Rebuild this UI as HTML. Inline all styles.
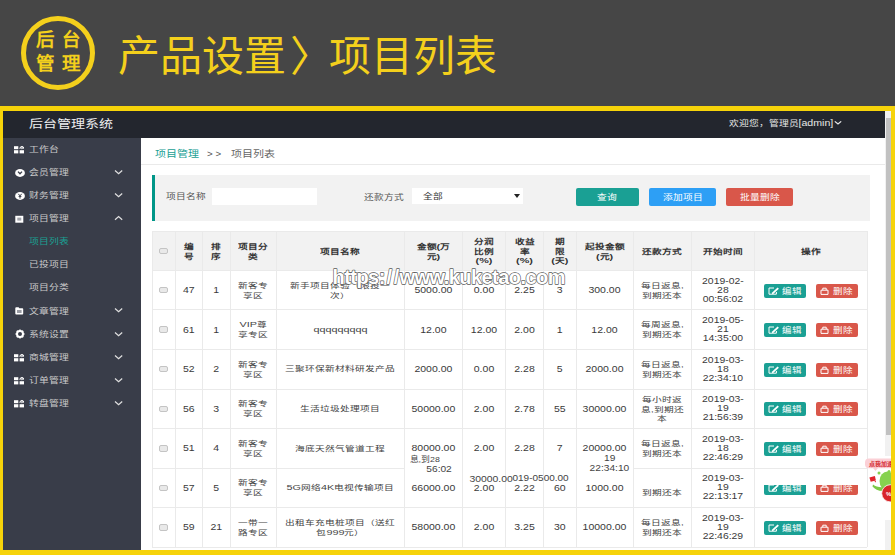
<!DOCTYPE html>
<html lang="zh-CN"><head><meta charset="utf-8">
<style>
html,body{margin:0;padding:0;}
body{width:895px;height:555px;overflow:hidden;position:relative;background:#464646;font-family:"Liberation Sans",sans-serif;}
.a{position:absolute;}
.vl{width:1px;background:#eaeaea;}
.hl{height:1px;background:#eaeaea;}
.cell{display:flex;align-items:center;justify-content:center;text-align:center;font-size:9.7px;line-height:9.6px;color:#555;}
.th{font-weight:bold;color:#333;}
.tm{display:inline-block;font-size:10.4px;line-height:11.7px;color:#3a3a3a;transform:scaleY(0.82);}
.lt{font-size:10.8px;}
.dg{display:inline-block;font-size:10.5px;line-height:12px;color:#3a3a3a;transform:scaleY(0.86);}
.t{display:inline-block;transform:scaleY(0.72);line-height:13.5px;}
.td .t{font-weight:500;color:#444;}
.th .t{position:relative;top:0.6px;}
.cb{display:inline-block;width:7px;height:4.5px;border:1px solid #c4c4c4;border-radius:2px;background:#e9e9e9;margin-left:0.5px}
.ops{justify-content:flex-start;}
.btn{position:absolute;top:50%;margin-top:-6.6px;height:14.2px;width:42px;border-radius:2px;color:#fff;font-size:9.5px;line-height:14.2px;display:flex;align-items:center;justify-content:center;}
.btn svg{display:block;}
.be{left:10px;background:#1aa094;}
.bd{left:61.5px;background:#d9574a;}
.frag{line-height:14px;color:#444;white-space:nowrap;transform:scaleY(0.86);}
.sqi{display:inline-block;transform:scaleY(0.86);}
.sq{transform:scaleY(0.84);}
.ttl{font-size:42px;line-height:50px;color:#f4d01c;font-weight:500;white-space:nowrap;}
.stext{font-size:9.8px;line-height:14px;white-space:nowrap;transform:scaleY(0.78);transform-origin:0 50%;}
.sicon svg{display:block;}
</style></head><body>
<!-- banner -->
<div class="a" style="left:21px;top:16px;width:64px;height:64px;border:5px solid #f4d01c;border-radius:50%;"></div>
<div class="a" style="left:36px;top:29px;font-family:'Liberation Serif',serif;font-weight:bold;font-size:18.5px;line-height:23.5px;color:#f4d01c;letter-spacing:6.5px;white-space:nowrap">后台<br>管理</div>
<div class="a ttl" style="left:118px;top:31.5px">产品设置</div><div class="a ttl" style="left:290px;top:31.5px">〉</div><div class="a ttl" style="left:329px;top:31.5px">项目列表</div>
<!-- frame -->
<div class="a" style="left:0;top:106px;width:895px;height:449px;background:#f6d30a"></div>
<div class="a" style="left:2.5px;top:111.3px;width:888.5px;height:439px;background:#fff;overflow:hidden"></div>
<!-- header -->
<div class="a" style="left:2.5px;top:111.3px;width:882.5px;height:26.5px;background:#23262e"></div>
<div class="a" style="left:29px;top:114.6px;font-size:14px;line-height:18px;color:#eee;white-space:nowrap;transform:scaleY(0.82)">后台管理系统</div>
<div class="a" style="left:728.5px;top:114.8px;font-size:9.8px;line-height:14px;color:#e6e6e6;white-space:nowrap;transform:scaleY(0.86)">欢迎您，管理员<span style="font-size:10.6px">[admin]</span><svg width="8" height="6" viewBox="0 0 8 6" style="margin-left:1px"><path d="M0.8 1.2l3.2 3 3.2-3" fill="none" stroke="#e6e6e6" stroke-width="1.3"/></svg></div>
<!-- scrollbar -->
<div class="a" style="left:885px;top:111px;width:6px;height:439px;background:#f1f1f1"></div>
<div class="a" style="left:885.5px;top:118px;width:5px;height:317px;background:#c1c1c1"></div>
<!-- sidebar -->
<div class="a" style="left:2.5px;top:137.8px;width:138.5px;height:412.5px;background:#393d49"></div>
<div class="a stext" style="left:28.5px;top:142.8px;color:#c9c9c9">工作台</div>
<div class="a sicon" style="left:13.7px;top:145.7px"><svg width="10.5" height="8" viewBox="0 0 10.5 8"><rect x="0" y="0.2" width="4.3" height="3" fill="#fff"/><path d="M5.9 2.9Q5.9 0.4 7.9 0.4Q9.9 0.4 9.9 2.9" fill="none" stroke="#fff" stroke-width="1"/><circle cx="7.9" cy="1.9" r="0.9" fill="none" stroke="#fff" stroke-width="0.8"/><rect x="0" y="4.2" width="4.3" height="3.2" fill="#fff"/><rect x="5.6" y="4.2" width="4.6" height="3.2" fill="#fff"/></svg></div>
<div class="a stext" style="left:28.5px;top:166.0px;color:#c9c9c9">会员管理</div>
<div class="a sicon" style="left:14.6px;top:168.9px"><svg width="10" height="8" viewBox="0 0 10 8"><ellipse cx="5" cy="4" rx="4.9" ry="3.9" fill="#fff"/><path d="M3 2.6l2 2.2 2-2.2" fill="none" stroke="#393d49" stroke-width="1.3"/></svg></div>
<div class="a sicon" style="left:114.3px;top:168.9px"><svg width="9.5" height="6" viewBox="0 0 9.5 6"><path d="M1 1.5l3.6 3.2L8.2 1.5" fill="none" stroke="#e0e0e0" stroke-width="1.25"/></svg></div>
<div class="a stext" style="left:28.5px;top:189.2px;color:#c9c9c9">财务管理</div>
<div class="a sicon" style="left:14.6px;top:192.1px"><svg width="10" height="8" viewBox="0 0 10 8"><ellipse cx="5" cy="4" rx="4.9" ry="3.9" fill="#fff"/><path d="M3.3 1.8l1.7 2.1 1.7-2.1M5 3.9V6.6M3.6 4.4h2.8" fill="none" stroke="#393d49" stroke-width="1"/></svg></div>
<div class="a sicon" style="left:114.3px;top:192.1px"><svg width="9.5" height="6" viewBox="0 0 9.5 6"><path d="M1 1.5l3.6 3.2L8.2 1.5" fill="none" stroke="#e0e0e0" stroke-width="1.25"/></svg></div>
<div class="a stext" style="left:28.5px;top:212.2px;color:#c9c9c9">项目管理</div>
<div class="a sicon" style="left:14.6px;top:215.1px"><svg width="9" height="8" viewBox="0 0 9 8"><rect x="0.3" y="0.8" width="8" height="6.9" fill="#fff"/><rect x="2.3" y="2.6" width="4" height="3" fill="#a4a6ad"/></svg></div>
<div class="a sicon" style="left:114.3px;top:215.1px"><svg width="9.5" height="6" viewBox="0 0 9.5 6"><path d="M1 4.7l3.6-3.2L8.2 4.7" fill="none" stroke="#e0e0e0" stroke-width="1.25"/></svg></div>
<div class="a stext" style="left:28.5px;top:235.2px;color:#1aa094">项目列表</div>
<div class="a stext" style="left:28.5px;top:258.3px;color:#c9c9c9">已投项目</div>
<div class="a stext" style="left:28.5px;top:281.4px;color:#c9c9c9">项目分类</div>
<div class="a stext" style="left:28.5px;top:304.5px;color:#c9c9c9">文章管理</div>
<div class="a sicon" style="left:14.6px;top:307.4px"><svg width="9" height="8" viewBox="0 0 9 8"><path d="M0.3 1.2Q0.3 0.3 1.2 0.3H3.6L4.4 1.2H7.4Q8.2 1.2 8.2 2V6.8Q8.2 7.6 7.4 7.6H1.2Q0.3 7.6 0.3 6.8z" fill="#fff"/><rect x="2" y="3" width="4.6" height="3" fill="#9a9ca4"/></svg></div>
<div class="a sicon" style="left:114.3px;top:307.4px"><svg width="9.5" height="6" viewBox="0 0 9.5 6"><path d="M1 1.5l3.6 3.2L8.2 1.5" fill="none" stroke="#e0e0e0" stroke-width="1.25"/></svg></div>
<div class="a stext" style="left:28.5px;top:327.6px;color:#c9c9c9">系统设置</div>
<div class="a sicon" style="left:14.6px;top:329.3px"><svg width="10" height="10" viewBox="0 0 10 10"><circle cx="5" cy="5" r="3" fill="none" stroke="#fff" stroke-width="2"/><path d="M5 0.5v1.8M5 7.7v1.8M0.5 5h1.8M7.7 5h1.8M1.8 1.8l1.3 1.3M6.9 6.9l1.3 1.3M1.8 8.2l1.3-1.3M6.9 3.1l1.3-1.3" stroke="#fff" stroke-width="1.5"/></svg></div>
<div class="a sicon" style="left:114.3px;top:330.5px"><svg width="9.5" height="6" viewBox="0 0 9.5 6"><path d="M1 1.5l3.6 3.2L8.2 1.5" fill="none" stroke="#e0e0e0" stroke-width="1.25"/></svg></div>
<div class="a stext" style="left:28.5px;top:350.7px;color:#c9c9c9">商城管理</div>
<div class="a sicon" style="left:13.7px;top:353.6px"><svg width="10.5" height="8" viewBox="0 0 10.5 8"><rect x="0" y="0.2" width="4.3" height="3" fill="#fff"/><path d="M5.9 2.9Q5.9 0.4 7.9 0.4Q9.9 0.4 9.9 2.9" fill="none" stroke="#fff" stroke-width="1"/><circle cx="7.9" cy="1.9" r="0.9" fill="none" stroke="#fff" stroke-width="0.8"/><rect x="0" y="4.2" width="4.3" height="3.2" fill="#fff"/><rect x="5.6" y="4.2" width="4.6" height="3.2" fill="#fff"/></svg></div>
<div class="a sicon" style="left:114.3px;top:353.6px"><svg width="9.5" height="6" viewBox="0 0 9.5 6"><path d="M1 1.5l3.6 3.2L8.2 1.5" fill="none" stroke="#e0e0e0" stroke-width="1.25"/></svg></div>
<div class="a stext" style="left:28.5px;top:373.8px;color:#c9c9c9">订单管理</div>
<div class="a sicon" style="left:13.7px;top:376.7px"><svg width="10.5" height="8" viewBox="0 0 10.5 8"><rect x="0" y="0.2" width="4.3" height="3" fill="#fff"/><path d="M5.9 2.9Q5.9 0.4 7.9 0.4Q9.9 0.4 9.9 2.9" fill="none" stroke="#fff" stroke-width="1"/><circle cx="7.9" cy="1.9" r="0.9" fill="none" stroke="#fff" stroke-width="0.8"/><rect x="0" y="4.2" width="4.3" height="3.2" fill="#fff"/><rect x="5.6" y="4.2" width="4.6" height="3.2" fill="#fff"/></svg></div>
<div class="a sicon" style="left:114.3px;top:376.7px"><svg width="9.5" height="6" viewBox="0 0 9.5 6"><path d="M1 1.5l3.6 3.2L8.2 1.5" fill="none" stroke="#e0e0e0" stroke-width="1.25"/></svg></div>
<div class="a stext" style="left:28.5px;top:396.8px;color:#c9c9c9">转盘管理</div>
<div class="a sicon" style="left:13.7px;top:399.7px"><svg width="10.5" height="8" viewBox="0 0 10.5 8"><rect x="0" y="0.2" width="4.3" height="3" fill="#fff"/><path d="M5.9 2.9Q5.9 0.4 7.9 0.4Q9.9 0.4 9.9 2.9" fill="none" stroke="#fff" stroke-width="1"/><circle cx="7.9" cy="1.9" r="0.9" fill="none" stroke="#fff" stroke-width="0.8"/><rect x="0" y="4.2" width="4.3" height="3.2" fill="#fff"/><rect x="5.6" y="4.2" width="4.6" height="3.2" fill="#fff"/></svg></div>
<div class="a sicon" style="left:114.3px;top:399.7px"><svg width="9.5" height="6" viewBox="0 0 9.5 6"><path d="M1 1.5l3.6 3.2L8.2 1.5" fill="none" stroke="#e0e0e0" stroke-width="1.25"/></svg></div>
<!-- breadcrumb -->
<div class="a sq" style="left:155.4px;top:146.5px;font-size:11px;line-height:14px;white-space:nowrap;color:#1aa094">项目管理</div>
<div class="a sq" style="left:207px;top:146.5px;font-size:9.8px;line-height:14px;white-space:nowrap;color:#555">&gt; &gt;</div>
<div class="a sq" style="left:231.4px;top:146.5px;font-size:11px;line-height:14px;white-space:nowrap;color:#666">项目列表</div>
<div class="a" style="left:141px;top:164px;width:744px;height:1px;background:#eaeaea"></div>
<!-- search panel -->
<div class="a" style="left:152px;top:174.5px;width:718px;height:46px;background:#f2f2f2"></div>
<div class="a" style="left:152px;top:174.5px;width:3px;height:46px;background:#009688"></div>
<div class="a sq" style="left:166px;top:189px;font-size:9.7px;line-height:14px;color:#555;white-space:nowrap">项目名称</div>
<div class="a" style="left:212.4px;top:188px;width:105px;height:16.7px;background:#fff"></div>
<div class="a sq" style="left:363.5px;top:190px;font-size:9.7px;line-height:14px;color:#555;white-space:nowrap">还款方式</div>
<div class="a" style="left:411.5px;top:188px;width:111.7px;height:15.5px;background:#fff"></div>
<div class="a sq" style="left:423px;top:189px;font-size:9.7px;line-height:14px;color:#333;white-space:nowrap">全部</div>
<div class="a" style="left:513.5px;top:193.5px;width:0;height:0;border-left:3px solid transparent;border-right:3px solid transparent;border-top:4px solid #222"></div>
<div class="a" style="left:575.7px;top:187.6px;width:63px;height:18.7px;background:#1aa094;border-radius:2px;color:#fff;font-size:9.7px;line-height:18.7px;text-align:center"><span class="sqi">查询</span></div>
<div class="a" style="left:649px;top:187.6px;width:67px;height:18.7px;background:#2d9ff5;border-radius:2px;color:#fff;font-size:9.7px;line-height:18.7px;text-align:center"><span class="sqi">添加项目</span></div>
<div class="a" style="left:726px;top:187.6px;width:67px;height:18.7px;background:#d9574a;border-radius:2px;color:#fff;font-size:9.7px;line-height:18.7px;text-align:center"><span class="sqi">批量删除</span></div>
<!-- table -->
<div class="a" style="left:152px;top:231.3px;width:715.30px;height:39.20px;background:#f2f2f2"></div>
<div class="a vl" style="left:151.50px;top:231.3px;height:315.90px"></div>
<div class="a vl" style="left:174.70px;top:231.3px;height:315.90px"></div>
<div class="a vl" style="left:202.00px;top:231.3px;height:315.90px"></div>
<div class="a vl" style="left:229.50px;top:231.3px;height:315.90px"></div>
<div class="a vl" style="left:276.00px;top:231.3px;height:315.90px"></div>
<div class="a vl" style="left:403.80px;top:231.3px;height:315.90px"></div>
<div class="a vl" style="left:462.00px;top:231.3px;height:315.90px"></div>
<div class="a vl" style="left:505.00px;top:231.3px;height:315.90px"></div>
<div class="a vl" style="left:543.00px;top:231.3px;height:315.90px"></div>
<div class="a vl" style="left:575.50px;top:231.3px;height:315.90px"></div>
<div class="a vl" style="left:632.50px;top:231.3px;height:315.90px"></div>
<div class="a vl" style="left:691.00px;top:231.3px;height:315.90px"></div>
<div class="a vl" style="left:753.80px;top:231.3px;height:315.90px"></div>
<div class="a vl" style="left:866.80px;top:231.3px;height:315.90px"></div>
<div class="a hl" style="left:152px;top:230.80px;width:715.30px"></div>
<div class="a hl" style="left:152px;top:270.00px;width:715.30px"></div>
<div class="a hl" style="left:152px;top:309.30px;width:715.30px"></div>
<div class="a hl" style="left:152px;top:348.90px;width:715.30px"></div>
<div class="a hl" style="left:152px;top:388.50px;width:715.30px"></div>
<div class="a hl" style="left:152px;top:428.10px;width:715.30px"></div>
<div class="a hl" style="left:152px;top:467.50px;width:252.00px"></div>
<div class="a hl" style="left:633px;top:467.50px;width:234.30px"></div>
<div class="a hl" style="left:152px;top:507.10px;width:715.30px"></div>
<div class="a hl" style="left:152px;top:546.70px;width:715.30px"></div>
<div class="a cell th" style="left:152px;top:231.3px;width:23.20px;height:39.20px;"><span class="cb"></span></div>
<div class="a cell th" style="left:175.2px;top:231.3px;width:27.30px;height:39.20px;"><span class="t">编<br>号</span></div>
<div class="a cell th" style="left:202.5px;top:231.3px;width:27.50px;height:39.20px;"><span class="t">排<br>序</span></div>
<div class="a cell th" style="left:230px;top:231.3px;width:46.50px;height:39.20px;"><span class="t">项目分<br>类</span></div>
<div class="a cell th" style="left:276.5px;top:231.3px;width:127.80px;height:39.20px;"><span class="t">项目名称</span></div>
<div class="a cell th" style="left:404.3px;top:231.3px;width:58.20px;height:39.20px;"><span class="t">金额<span class="lt">(</span>万<br>元<span class="lt">)</span></span></div>
<div class="a cell th" style="left:462.5px;top:231.3px;width:43.00px;height:39.20px;"><span class="t">分润<br>比例<br><span class="lt">(%)</span></span></div>
<div class="a cell th" style="left:505.5px;top:231.3px;width:38.00px;height:39.20px;"><span class="t">收益<br>率<br><span class="lt">(%)</span></span></div>
<div class="a cell th" style="left:543.5px;top:231.3px;width:32.50px;height:39.20px;"><span class="t">期<br>限<br><span class="lt">(</span>天<span class="lt">)</span></span></div>
<div class="a cell th" style="left:576px;top:231.3px;width:57.00px;height:39.20px;"><span class="t">起投金额<br><span class="lt">(</span>元<span class="lt">)</span></span></div>
<div class="a cell th" style="left:633px;top:231.3px;width:58.50px;height:39.20px;"><span class="t">还款方式</span></div>
<div class="a cell th" style="left:691.5px;top:231.3px;width:62.80px;height:39.20px;"><span class="t">开始时间</span></div>
<div class="a cell th" style="left:754.3px;top:231.3px;width:113.00px;height:39.20px;"><span class="t">操作</span></div>
<div class="a cell" style="left:152px;top:270.5px;width:23.20px;height:39.30px;"><span class="cb"></span></div>
<div class="a cell td" style="left:175.2px;top:270.5px;width:27.30px;height:39.30px;"><span class="dg">47</span></div>
<div class="a cell td" style="left:202.5px;top:270.5px;width:27.50px;height:39.30px;"><span class="dg">1</span></div>
<div class="a cell td" style="left:230px;top:270.5px;width:46.50px;height:39.30px;"><span class="t">新客专<br>享区</span></div>
<div class="a cell td" style="left:276.5px;top:270.5px;width:127.80px;height:39.30px;"><span class="t">新手项目体验（限投一<br>次）</span></div>
<div class="a cell td" style="left:404.3px;top:270.5px;width:58.20px;height:39.30px;"><span class="dg">5000.00</span></div>
<div class="a cell td" style="left:462.5px;top:270.5px;width:43.00px;height:39.30px;"><span class="dg">0.00</span></div>
<div class="a cell td" style="left:505.5px;top:270.5px;width:38.00px;height:39.30px;"><span class="dg">2.25</span></div>
<div class="a cell td" style="left:543.5px;top:270.5px;width:32.50px;height:39.30px;"><span class="dg">3</span></div>
<div class="a cell td" style="left:576px;top:270.5px;width:57.00px;height:39.30px;"><span class="dg">300.00</span></div>
<div class="a cell td" style="left:633px;top:270.5px;width:58.50px;height:39.30px;"><span class="t">每日返息,<br>到期还本</span></div>
<div class="a cell td" style="left:691.5px;top:270.5px;width:62.80px;height:39.30px;"><span class="tm">2019-02-<br>28<br>00:56:02</span></div>
<div class="a cell ops" style="left:754.3px;top:270.5px;width:113.00px;height:39.30px;"><span class="btn be"><svg width="12" height="8" viewBox="0 0 12 8" style="margin-right:2px"><path d="M6 1H1v6.2h7.4V5" fill="none" stroke="#fff" stroke-width="1"/><path d="M4.2 5.6L9.6 0.5l1.3 1.2-5.4 5.1-1.6.4z" fill="#fff"/></svg><span class="sqi">编辑</span></span><span class="btn bd"><svg width="9" height="8" viewBox="0 0 9 8" style="margin-right:4px"><path d="M1 3.2h7v4.2H1z M2.8 3.2V1.2h3.4V3.2" fill="none" stroke="#fff" stroke-width="1"/></svg><span class="sqi">删除</span></span></div>
<div class="a cell" style="left:152px;top:309.8px;width:23.20px;height:39.60px;"><span class="cb"></span></div>
<div class="a cell td" style="left:175.2px;top:309.8px;width:27.30px;height:39.60px;"><span class="dg">61</span></div>
<div class="a cell td" style="left:202.5px;top:309.8px;width:27.50px;height:39.60px;"><span class="dg">1</span></div>
<div class="a cell td" style="left:230px;top:309.8px;width:46.50px;height:39.60px;"><span class="t"><span class="lt">VIP</span>尊<br>享专区</span></div>
<div class="a cell td" style="left:276.5px;top:309.8px;width:127.80px;height:39.60px;"><span class="t"><span class="lt">qqqqqqqqq</span></span></div>
<div class="a cell td" style="left:404.3px;top:309.8px;width:58.20px;height:39.60px;"><span class="dg">12.00</span></div>
<div class="a cell td" style="left:462.5px;top:309.8px;width:43.00px;height:39.60px;"><span class="dg">12.00</span></div>
<div class="a cell td" style="left:505.5px;top:309.8px;width:38.00px;height:39.60px;"><span class="dg">2.00</span></div>
<div class="a cell td" style="left:543.5px;top:309.8px;width:32.50px;height:39.60px;"><span class="dg">1</span></div>
<div class="a cell td" style="left:576px;top:309.8px;width:57.00px;height:39.60px;"><span class="dg">12.00</span></div>
<div class="a cell td" style="left:633px;top:309.8px;width:58.50px;height:39.60px;"><span class="t">每周返息,<br>到期还本</span></div>
<div class="a cell td" style="left:691.5px;top:309.8px;width:62.80px;height:39.60px;"><span class="tm">2019-05-<br>21<br>14:35:00</span></div>
<div class="a cell ops" style="left:754.3px;top:309.8px;width:113.00px;height:39.60px;"><span class="btn be"><svg width="12" height="8" viewBox="0 0 12 8" style="margin-right:2px"><path d="M6 1H1v6.2h7.4V5" fill="none" stroke="#fff" stroke-width="1"/><path d="M4.2 5.6L9.6 0.5l1.3 1.2-5.4 5.1-1.6.4z" fill="#fff"/></svg><span class="sqi">编辑</span></span><span class="btn bd"><svg width="9" height="8" viewBox="0 0 9 8" style="margin-right:4px"><path d="M1 3.2h7v4.2H1z M2.8 3.2V1.2h3.4V3.2" fill="none" stroke="#fff" stroke-width="1"/></svg><span class="sqi">删除</span></span></div>
<div class="a cell" style="left:152px;top:349.4px;width:23.20px;height:39.60px;"><span class="cb"></span></div>
<div class="a cell td" style="left:175.2px;top:349.4px;width:27.30px;height:39.60px;"><span class="dg">52</span></div>
<div class="a cell td" style="left:202.5px;top:349.4px;width:27.50px;height:39.60px;"><span class="dg">2</span></div>
<div class="a cell td" style="left:230px;top:349.4px;width:46.50px;height:39.60px;"><span class="t">新客专<br>享区</span></div>
<div class="a cell td" style="left:276.5px;top:349.4px;width:127.80px;height:39.60px;"><span class="t">三聚环保新材料研发产品</span></div>
<div class="a cell td" style="left:404.3px;top:349.4px;width:58.20px;height:39.60px;"><span class="dg">2000.00</span></div>
<div class="a cell td" style="left:462.5px;top:349.4px;width:43.00px;height:39.60px;"><span class="dg">0.00</span></div>
<div class="a cell td" style="left:505.5px;top:349.4px;width:38.00px;height:39.60px;"><span class="dg">2.28</span></div>
<div class="a cell td" style="left:543.5px;top:349.4px;width:32.50px;height:39.60px;"><span class="dg">5</span></div>
<div class="a cell td" style="left:576px;top:349.4px;width:57.00px;height:39.60px;"><span class="dg">2000.00</span></div>
<div class="a cell td" style="left:633px;top:349.4px;width:58.50px;height:39.60px;"><span class="t">每日返息,<br>到期还本</span></div>
<div class="a cell td" style="left:691.5px;top:349.4px;width:62.80px;height:39.60px;"><span class="tm">2019-03-<br>18<br>22:34:10</span></div>
<div class="a cell ops" style="left:754.3px;top:349.4px;width:113.00px;height:39.60px;"><span class="btn be"><svg width="12" height="8" viewBox="0 0 12 8" style="margin-right:2px"><path d="M6 1H1v6.2h7.4V5" fill="none" stroke="#fff" stroke-width="1"/><path d="M4.2 5.6L9.6 0.5l1.3 1.2-5.4 5.1-1.6.4z" fill="#fff"/></svg><span class="sqi">编辑</span></span><span class="btn bd"><svg width="9" height="8" viewBox="0 0 9 8" style="margin-right:4px"><path d="M1 3.2h7v4.2H1z M2.8 3.2V1.2h3.4V3.2" fill="none" stroke="#fff" stroke-width="1"/></svg><span class="sqi">删除</span></span></div>
<div class="a cell" style="left:152px;top:389.0px;width:23.20px;height:39.60px;"><span class="cb"></span></div>
<div class="a cell td" style="left:175.2px;top:389.0px;width:27.30px;height:39.60px;"><span class="dg">56</span></div>
<div class="a cell td" style="left:202.5px;top:389.0px;width:27.50px;height:39.60px;"><span class="dg">3</span></div>
<div class="a cell td" style="left:230px;top:389.0px;width:46.50px;height:39.60px;"><span class="t">新客专<br>享区</span></div>
<div class="a cell td" style="left:276.5px;top:389.0px;width:127.80px;height:39.60px;"><span class="t">生活垃圾处理项目</span></div>
<div class="a cell td" style="left:404.3px;top:389.0px;width:58.20px;height:39.60px;"><span class="dg">50000.00</span></div>
<div class="a cell td" style="left:462.5px;top:389.0px;width:43.00px;height:39.60px;"><span class="dg">2.00</span></div>
<div class="a cell td" style="left:505.5px;top:389.0px;width:38.00px;height:39.60px;"><span class="dg">2.78</span></div>
<div class="a cell td" style="left:543.5px;top:389.0px;width:32.50px;height:39.60px;"><span class="dg">55</span></div>
<div class="a cell td" style="left:576px;top:389.0px;width:57.00px;height:39.60px;"><span class="dg">30000.00</span></div>
<div class="a cell td" style="left:633px;top:389.0px;width:58.50px;height:39.60px;"><span class="t">每小时返<br>息,到期还<br>本</span></div>
<div class="a cell td" style="left:691.5px;top:389.0px;width:62.80px;height:39.60px;"><span class="tm">2019-03-<br>19<br>21:56:39</span></div>
<div class="a cell ops" style="left:754.3px;top:389.0px;width:113.00px;height:39.60px;"><span class="btn be"><svg width="12" height="8" viewBox="0 0 12 8" style="margin-right:2px"><path d="M6 1H1v6.2h7.4V5" fill="none" stroke="#fff" stroke-width="1"/><path d="M4.2 5.6L9.6 0.5l1.3 1.2-5.4 5.1-1.6.4z" fill="#fff"/></svg><span class="sqi">编辑</span></span><span class="btn bd"><svg width="9" height="8" viewBox="0 0 9 8" style="margin-right:4px"><path d="M1 3.2h7v4.2H1z M2.8 3.2V1.2h3.4V3.2" fill="none" stroke="#fff" stroke-width="1"/></svg><span class="sqi">删除</span></span></div>
<div class="a cell" style="left:152px;top:428.6px;width:23.20px;height:39.40px;"><span class="cb"></span></div>
<div class="a cell td" style="left:175.2px;top:428.6px;width:27.30px;height:39.40px;"><span class="dg">51</span></div>
<div class="a cell td" style="left:202.5px;top:428.6px;width:27.50px;height:39.40px;"><span class="dg">4</span></div>
<div class="a cell td" style="left:230px;top:428.6px;width:46.50px;height:39.40px;"><span class="t">新客专<br>享区</span></div>
<div class="a cell td" style="left:276.5px;top:428.6px;width:127.80px;height:39.40px;"><span class="t">海底天然气管道工程</span></div>
<div class="a cell td" style="left:404.3px;top:428.6px;width:58.20px;height:39.40px;"><span class="dg">80000.00</span></div>
<div class="a cell td" style="left:462.5px;top:428.6px;width:43.00px;height:39.40px;"><span class="dg">2.00</span></div>
<div class="a cell td" style="left:505.5px;top:428.6px;width:38.00px;height:39.40px;"><span class="dg">2.28</span></div>
<div class="a cell td" style="left:543.5px;top:428.6px;width:32.50px;height:39.40px;"><span class="dg">7</span></div>
<div class="a cell td" style="left:576px;top:428.6px;width:57.00px;height:39.40px;"><span class="dg">20000.00</span></div>
<div class="a cell td" style="left:633px;top:428.6px;width:58.50px;height:39.40px;"><span class="t">每日返息,<br>到期还本</span></div>
<div class="a cell td" style="left:691.5px;top:428.6px;width:62.80px;height:39.40px;"><span class="tm">2019-03-<br>18<br>22:46:29</span></div>
<div class="a cell ops" style="left:754.3px;top:428.6px;width:113.00px;height:39.40px;"><span class="btn be"><svg width="12" height="8" viewBox="0 0 12 8" style="margin-right:2px"><path d="M6 1H1v6.2h7.4V5" fill="none" stroke="#fff" stroke-width="1"/><path d="M4.2 5.6L9.6 0.5l1.3 1.2-5.4 5.1-1.6.4z" fill="#fff"/></svg><span class="sqi">编辑</span></span><span class="btn bd"><svg width="9" height="8" viewBox="0 0 9 8" style="margin-right:4px"><path d="M1 3.2h7v4.2H1z M2.8 3.2V1.2h3.4V3.2" fill="none" stroke="#fff" stroke-width="1"/></svg><span class="sqi">删除</span></span></div>
<div class="a cell" style="left:152px;top:468.0px;width:23.20px;height:39.60px;"><span class="cb"></span></div>
<div class="a cell td" style="left:175.2px;top:468.0px;width:27.30px;height:39.60px;"><span class="dg">57</span></div>
<div class="a cell td" style="left:202.5px;top:468.0px;width:27.50px;height:39.60px;"><span class="dg">5</span></div>
<div class="a cell td" style="left:230px;top:468.0px;width:46.50px;height:39.60px;"><span class="t">新客专<br>享区</span></div>
<div class="a cell td" style="left:276.5px;top:468.0px;width:127.80px;height:39.60px;"><span class="t"><span class="lt">5G</span>网络<span class="lt">4K</span>电视传输项目</span></div>
<div class="a cell td" style="left:404.3px;top:468.0px;width:58.20px;height:39.60px;"><span class="dg">66000.00</span></div>
<div class="a cell td" style="left:462.5px;top:468.0px;width:43.00px;height:39.60px;"><span class="dg">2.00</span></div>
<div class="a cell td" style="left:505.5px;top:468.0px;width:38.00px;height:39.60px;"><span class="dg">2.22</span></div>
<div class="a cell td" style="left:543.5px;top:468.0px;width:32.50px;height:39.60px;"><span class="dg">60</span></div>
<div class="a cell td" style="left:576px;top:468.0px;width:57.00px;height:39.60px;"><span class="dg">1000.00</span></div>
<div class="a cell td" style="left:633px;top:468.0px;width:58.50px;height:39.60px;"><span class="t"><span style="visibility:hidden">每日返息,</span><br>到期还本</span></div>
<div class="a cell td" style="left:691.5px;top:468.0px;width:62.80px;height:39.60px;"><span class="tm">2019-03-<br>19<br>22:13:17</span></div>
<div class="a cell ops" style="left:754.3px;top:468.0px;width:113.00px;height:39.60px;"><span class="btn be"><svg width="12" height="8" viewBox="0 0 12 8" style="margin-right:2px"><path d="M6 1H1v6.2h7.4V5" fill="none" stroke="#fff" stroke-width="1"/><path d="M4.2 5.6L9.6 0.5l1.3 1.2-5.4 5.1-1.6.4z" fill="#fff"/></svg><span class="sqi">编辑</span></span><span class="btn bd"><svg width="9" height="8" viewBox="0 0 9 8" style="margin-right:4px"><path d="M1 3.2h7v4.2H1z M2.8 3.2V1.2h3.4V3.2" fill="none" stroke="#fff" stroke-width="1"/></svg><span class="sqi">删除</span></span></div>
<div class="a cell" style="left:152px;top:507.6px;width:23.20px;height:39.60px;"><span class="cb"></span></div>
<div class="a cell td" style="left:175.2px;top:507.6px;width:27.30px;height:39.60px;"><span class="dg">59</span></div>
<div class="a cell td" style="left:202.5px;top:507.6px;width:27.50px;height:39.60px;"><span class="dg">21</span></div>
<div class="a cell td" style="left:230px;top:507.6px;width:46.50px;height:39.60px;"><span class="t">一带一<br>路专区</span></div>
<div class="a cell td" style="left:276.5px;top:507.6px;width:127.80px;height:39.60px;"><span class="t">出租车充电桩项目（送红<br>包<span class="lt">999</span>元）</span></div>
<div class="a cell td" style="left:404.3px;top:507.6px;width:58.20px;height:39.60px;"><span class="dg">58000.00</span></div>
<div class="a cell td" style="left:462.5px;top:507.6px;width:43.00px;height:39.60px;"><span class="dg">2.00</span></div>
<div class="a cell td" style="left:505.5px;top:507.6px;width:38.00px;height:39.60px;"><span class="dg">3.25</span></div>
<div class="a cell td" style="left:543.5px;top:507.6px;width:32.50px;height:39.60px;"><span class="dg">30</span></div>
<div class="a cell td" style="left:576px;top:507.6px;width:57.00px;height:39.60px;"><span class="dg">10000.00</span></div>
<div class="a cell td" style="left:633px;top:507.6px;width:58.50px;height:39.60px;"><span class="t">每日返息,<br>到期还本</span></div>
<div class="a cell td" style="left:691.5px;top:507.6px;width:62.80px;height:39.60px;"><span class="tm">2019-03-<br>19<br>22:46:29</span></div>
<div class="a cell ops" style="left:754.3px;top:507.6px;width:113.00px;height:39.60px;"><span class="btn be"><svg width="12" height="8" viewBox="0 0 12 8" style="margin-right:2px"><path d="M6 1H1v6.2h7.4V5" fill="none" stroke="#fff" stroke-width="1"/><path d="M4.2 5.6L9.6 0.5l1.3 1.2-5.4 5.1-1.6.4z" fill="#fff"/></svg><span class="sqi">编辑</span></span><span class="btn bd"><svg width="9" height="8" viewBox="0 0 9 8" style="margin-right:4px"><path d="M1 3.2h7v4.2H1z M2.8 3.2V1.2h3.4V3.2" fill="none" stroke="#fff" stroke-width="1"/></svg><span class="sqi">删除</span></span></div>
<div class="a" style="left:755px;top:468.6px;width:111.5px;height:16px;background:#fff"></div>
<div class="a frag" style="left:409.6px;top:451.8px;font-size:8.8px">息,到28</div>
<div class="a frag" style="left:426.3px;top:462.3px;font-size:10.2px">56:02</div>
<div class="a frag" style="left:469.4px;top:471.9px;font-size:10.4px">30000.00</div>
<div class="a frag" style="left:512.5px;top:470.5px;font-size:10.0px">019-0500.00</div>
<div class="a frag" style="left:604px;top:451.3px;font-size:10.2px">19</div>
<div class="a frag" style="left:589.6px;top:461.0px;font-size:10.2px">22:34:10</div>
<!-- mascot -->
<div class="a" style="left:884px;top:456px;width:7px;height:64px;background:#fff"></div>
<svg class="a" style="left:860px;top:452px" width="35" height="60" viewBox="0 0 35 60">
<rect x="5" y="6.5" width="34" height="9.8" rx="4" fill="#fbd0d6"/>
<path d="M13 16l2.5 3 2.5-3z" fill="#fbd0d6"/>
<text x="8.6" y="13.6" font-family="Liberation Sans" font-size="6" font-weight="bold" fill="#d42a32">点我加速</text>
<path d="M9.4 25.5l5.5-1.5 1 4.5-5.2 1.2z" fill="#e0242c"/>
<path d="M14.5 29l1.5 1" stroke="#e0242c" stroke-width="1"/>
<ellipse cx="27.5" cy="29" rx="8" ry="9.5" fill="#86d24f"/>
<path d="M13 32.5c3 2.5 7 3.2 12 2.5l-1 4c-5 .5-9-1.5-11.5-4.5z" fill="#7cc947"/>
<circle cx="19" cy="21" r="1.5" fill="#86d24f"/>
<circle cx="29" cy="19.5" r="1.5" fill="#86d24f"/>
<circle cx="30.3" cy="41.3" r="8.6" fill="#d9262a" stroke="#fff" stroke-width="0.8"/>
<text x="26" y="44" font-family="Liberation Sans" font-size="6" font-weight="bold" fill="#fff">%</text>
</svg>
<div class="a" style="left:891px;top:106px;width:4px;height:449px;background:#f6d30a"></div>
<!-- watermark -->
<svg class="a" style="left:0;top:0" width="895" height="555"><text x="332.5" y="284.2" font-family="Liberation Sans" font-weight="bold" font-size="20" letter-spacing="-0.55" fill="#fff" stroke="#5a5a5a" stroke-width="1.3" paint-order="stroke" stroke-linejoin="round"><tspan>https:</tspan><tspan dx="1.8">/</tspan><tspan dx="2.2">/</tspan><tspan dx="0.6">www.kuketao.com</tspan></text></svg>
</body></html>
